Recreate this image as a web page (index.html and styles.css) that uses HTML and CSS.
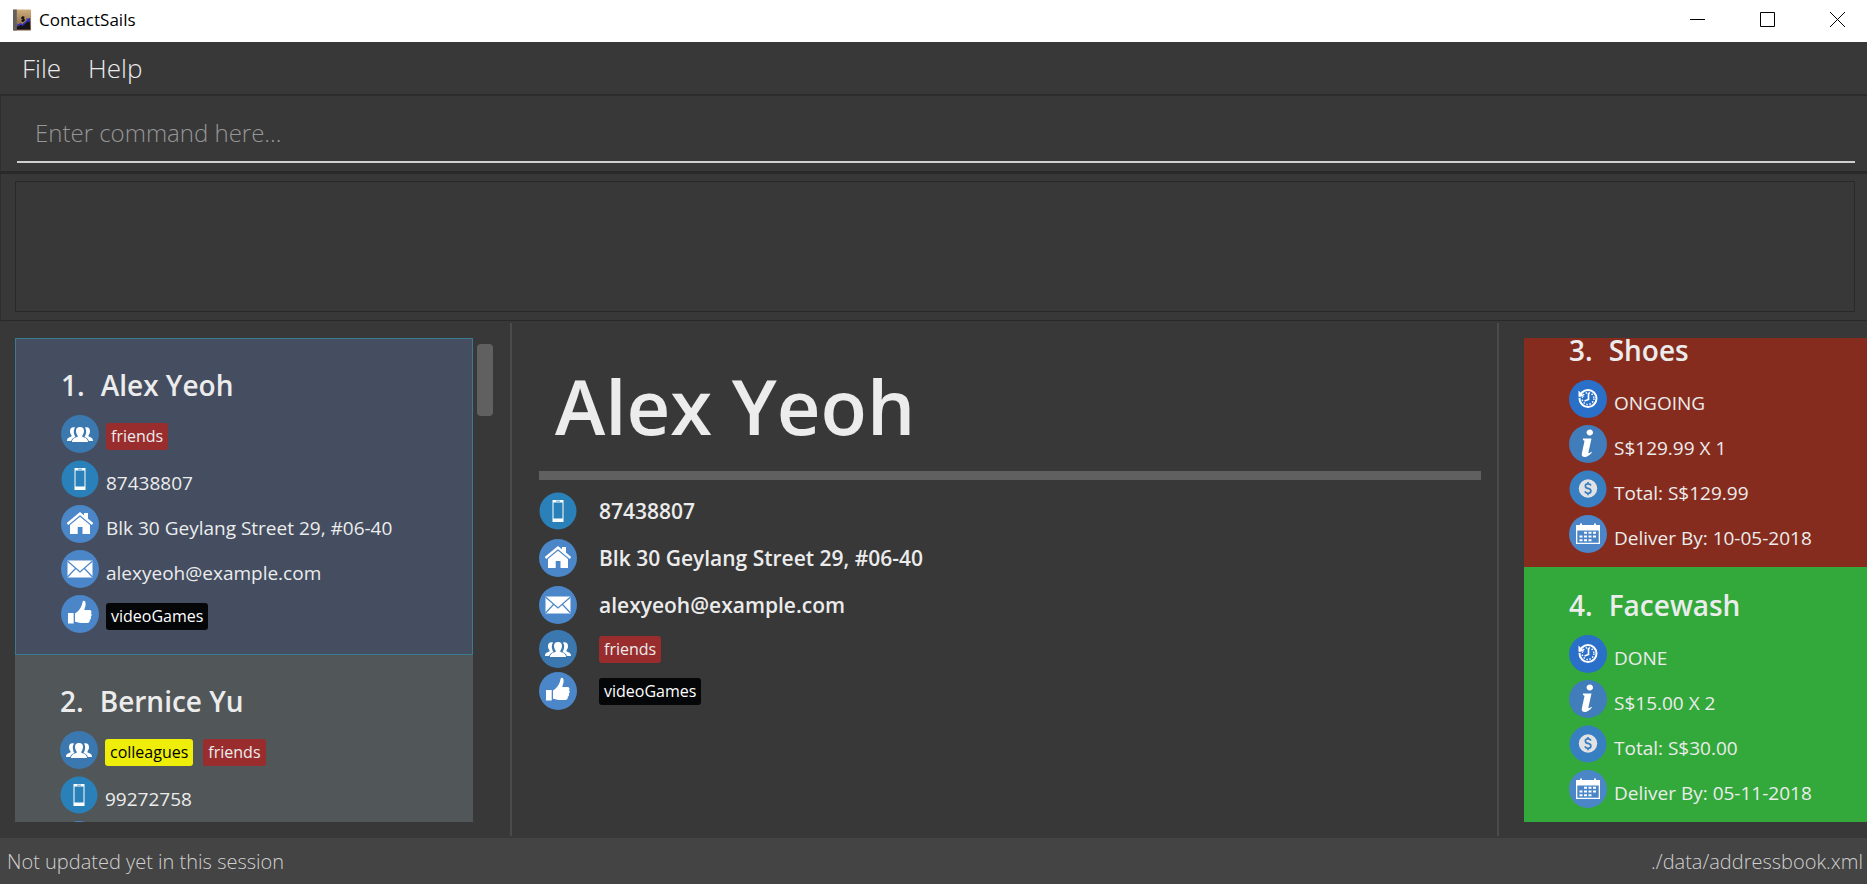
FILE: index.html
```html
<!DOCTYPE html>
<html lang="en">
<head>
<meta charset="utf-8">
<title>ContactSails</title>
<link rel="stylesheet" href="styles.css">
</head>
<body>
<svg class="sprite" aria-hidden="true">
  <symbol id="group" viewBox="0 0 38 38">
    <circle cx="19" cy="19" r="19" fill="#3b78b0"/>
    <g fill="#fff">
      <path d="M12.600 12.300c-2.600 0-3.900 1.900-3.600 4.500.2 1.700.8 2.700 1.500 3.400v1.300c-2.600 1-4.500 1.500-4.500 4.500h4.200c.3-2 1.700-3 4.300-4-1.900-3-2.400-7-.3-9.400z"/>
      <path d="M25.400 12.300c2.600 0 3.900 1.900 3.600 4.500-.2 1.700-.8 2.700-1.500 3.400v1.300c2.600 1 4.500 1.500 4.500 4.500h-4.200c-.3-2-1.700-3-4.300-4 1.900-3 2.400-7 .3-9.400z"/>
      <path d="M19 12c3 0 4.300 2 4 4.600-.2 2-1 3.300-1.700 4.100v1c3 1.200 5.700 1.800 5.700 5.300H11c0-3.500 2.700-4.100 5.700-5.300v-1c-.7-.8-1.500-2.100-1.700-4.100-.3-2.600 1-4.600 4-4.600z"/>
    </g>
  </symbol>
  <symbol id="phone" viewBox="0 0 38 38">
    <circle cx="19" cy="19" r="18.500" fill="#2a80b9"/>
    <path fill="#fff" fill-rule="evenodd" d="M13.500 8h11v22h-11zM14.500 10.500v16h9v-16zM17 8.800v.8h4v-.8z"/>
  </symbol>
  <symbol id="house" viewBox="0 0 38 38">
    <circle cx="19" cy="19" r="19" fill="#4a86c8"/>
    <path fill="none" stroke="#fff" stroke-width="2.400" d="M6.500 19 19 8.500 31.500 19"/>
    <path fill="#fff" d="M23 8h4v7l-4-3zM19 11.800l10 8.200v9h-7.500v-7h-4.800v7H9v-9z"/>
  </symbol>
  <symbol id="mail" viewBox="0 0 38 38">
    <circle cx="19" cy="19" r="19" fill="#4a86c8"/>
    <path fill="#fff" d="M6.500 10.500h25v17h-25z"/>
    <path fill="none" stroke="#4a86c8" stroke-width="1.200" d="M6.500 11 19 22 31.500 11M6.500 27l8-8.500M31.500 27l-8-8.500"/>
  </symbol>
  <symbol id="thumb" viewBox="0 0 38 38">
    <circle cx="19" cy="19" r="19" fill="#4a86c8"/>
    <path fill="#fff" d="M7 18h5.700v10.500H7zM14 18.500c3.500-2 6-5.500 7-9 .3-1.700.6-3.500 1.600-3.700 1.600-.2 2.200 1.700 2 4-.2 2-1 3.700-1.400 5.200h5.300c2 0 2.500 2 1.500 3.200 1 1 .9 2.600-.2 3.400.6 1.300.2 2.600-1 3.200.2 1.700-.5 3.200-2.800 3.200h-6c-2.500 0-3.500-1.300-6-1.300z"/>
  </symbol>
  <symbol id="clock" viewBox="0 0 38 38">
    <circle cx="19" cy="19" r="19" fill="#2b70c8"/>
    <circle cx="19" cy="18.500" r="8.500" fill="none" stroke="#fff" stroke-width="2"/>
    <circle cx="19" cy="18.500" r="5.900" fill="none" stroke="#fff" stroke-width="1.500" stroke-dasharray="1.400 1.690"/>
    <path fill="#fff" d="M9.500 10.500v6h6z"/>
    <path fill="none" stroke="#2b70c8" stroke-width="1" d="m8.500 17.500 4.500-.3"/>
    <path fill="none" stroke="#fff" stroke-width="1.700" d="M19.500 13v6.500L15.500 21"/>
  </symbol>
  <symbol id="info" viewBox="0 0 38 38">
    <circle cx="19" cy="19" r="19" fill="#407dba"/>
    <ellipse cx="20.800" cy="7.500" rx="3.200" ry="2.900" fill="#fff" transform="rotate(-25 20.800 7.500)"/>
    <path fill="#fff" d="M14 13.500h8.500l-3 13.500c-.3 1.500.4 1.900 2.900-.2l.5.800c-2.600 3.300-5.300 4.700-7.700 4.400-2.300-.3-2.800-1.700-2.300-4l2.500-11.500c.2-1-.2-1.300-1.500-1.300z"/>
  </symbol>
  <symbol id="dollar" viewBox="0 0 38 38">
    <circle cx="19" cy="19" r="18.500" fill="#387fc2"/>
    <circle cx="19" cy="18.500" r="9.200" fill="#e2e2e4"/>
    <path fill="none" stroke="#387fc2" stroke-width="1.700" d="M22 15.500c-.7-1.200-1.700-1.600-3-1.600-3.500 0-3.500 3.800 0 4.500 4 .8 3.700 4.900 0 4.900-1.500 0-2.600-.6-3.200-1.900M19 12v2M19 23v2.300"/>
  </symbol>
  <symbol id="calendar" viewBox="0 0 38 38">
    <circle cx="19" cy="19" r="19" fill="#4a86c8"/>
    <path fill="#fff" fill-rule="evenodd" d="M7 10h4V8.500h2V10h12V8.500h2V10h4v19H7zM8.300 15.500v12.200h21.400V15.500z"/>
    <path stroke="#fff" stroke-width="2" stroke-dasharray="3 1.500" d="M15 17.800h12.500M10.500 21.500h16.500M10.500 25.200h12"/>
  </symbol>
</svg>

<div class="window">
  <header class="titlebar">
    <svg class="app-icon" viewBox="0 0 20 22" aria-hidden="true">
      <defs>
        <linearGradient id="cover" x1="0" y1="0" x2="0" y2="1"><stop offset="0" stop-color="#cfae7e"/><stop offset="1" stop-color="#7a5c3c"/></linearGradient>
      </defs>
      <rect width="19" height="22" rx="1" fill="url(#cover)"/>
      <rect width="4" height="22" fill="#66605c"/>
      <path fill="#17131a" d="M4 18l4-2 3-1 3-3 4-3v12H4z"/>
      <path fill="none" stroke="#15100c" stroke-width="1.500" d="M12 8.300c-3-1-3.500 1.200-1.500 1.600 2.200.3 1.800 2.600-1.600 1.700M10.500 7v6"/>
      <path fill="none" stroke="#3430c8" stroke-width="1.400" d="m4 17 4-2 2 1.500 6-5.500M14 10h3v3"/>
    </svg>
    <h1 class="app-name">ContactSails</h1>
    <div class="window-buttons">
      <button type="button" aria-label="Minimize"><svg viewBox="0 0 15 15"><path d="M0 7.500h15"/></svg></button>
      <button type="button" aria-label="Maximize"><svg viewBox="0 0 15 15"><path d="M.5.5h14v14H.5z"/></svg></button>
      <button type="button" aria-label="Close"><svg viewBox="0 0 15 15"><path d="m0 0 15 15M15 0 0 15"/></svg></button>
    </div>
  </header>

  <nav class="menubar">
    <button type="button">File</button>
    <button type="button">Help</button>
  </nav>

  <div class="command">
    <input class="command-input" type="text" placeholder="Enter command here..." aria-label="Command">
  </div>

  <div class="result"><div class="result-box" role="status"></div></div>

  <main class="content">
    <section class="people" aria-label="Contacts">
      <div class="list">
        <article class="card selected">
          <h2 class="card-title"><span>1.</span><span>Alex Yeoh</span></h2>
          <div class="row"><svg class="icon"><use href="#group"/></svg><div class="tags"><span class="tag red">friends</span></div></div>
          <div class="row"><svg class="icon"><use href="#phone"/></svg><span class="value">87438807</span></div>
          <div class="row"><svg class="icon"><use href="#house"/></svg><span class="value">Blk 30 Geylang Street 29, #06-40</span></div>
          <div class="row"><svg class="icon"><use href="#mail"/></svg><span class="value">alexyeoh@example.com</span></div>
          <div class="row"><svg class="icon"><use href="#thumb"/></svg><div class="tags"><span class="tag black">videoGames</span></div></div>
        </article>
        <article class="card">
          <h2 class="card-title"><span>2.</span><span>Bernice Yu</span></h2>
          <div class="row"><svg class="icon"><use href="#group"/></svg><div class="tags"><span class="tag yellow">colleagues</span><span class="tag red">friends</span></div></div>
          <div class="row"><svg class="icon"><use href="#phone"/></svg><span class="value">99272758</span></div>
          <div class="row"><svg class="icon"><use href="#house"/></svg></div>
        </article>
      </div>
      <div class="scrollbar"><div class="thumb"></div></div>
    </section>

    <div class="divider"></div>

    <section class="detail" aria-label="Contact details">
      <h2 class="detail-name">Alex Yeoh</h2>
      <hr class="rule">
      <div class="detail-row"><svg class="icon"><use href="#phone"/></svg><span>87438807</span></div>
      <div class="detail-row"><svg class="icon"><use href="#house"/></svg><span>Blk 30 Geylang Street 29, #06-40</span></div>
      <div class="detail-row"><svg class="icon"><use href="#mail"/></svg><span>alexyeoh@example.com</span></div>
      <div class="detail-row tight"><svg class="icon"><use href="#group"/></svg><span class="tag red">friends</span></div>
      <div class="detail-row tight"><svg class="icon"><use href="#thumb"/></svg><span class="tag black">videoGames</span></div>
    </section>

    <div class="divider"></div>

    <section class="orders" aria-label="Orders">
      <article class="card ongoing">
        <h2 class="card-title"><span>3.</span><span>Shoes</span></h2>
        <div class="row"><svg class="icon"><use href="#clock"/></svg><span class="value">ONGOING</span></div>
        <div class="row"><svg class="icon"><use href="#info"/></svg><span class="value">S$129.99 X 1</span></div>
        <div class="row"><svg class="icon"><use href="#dollar"/></svg><span class="value">Total: S$129.99</span></div>
        <div class="row"><svg class="icon"><use href="#calendar"/></svg><span class="value">Deliver By: 10-05-2018</span></div>
      </article>
      <article class="card done">
        <h2 class="card-title"><span>4.</span><span>Facewash</span></h2>
        <div class="row"><svg class="icon"><use href="#clock"/></svg><span class="value">DONE</span></div>
        <div class="row"><svg class="icon"><use href="#info"/></svg><span class="value">S$15.00 X 2</span></div>
        <div class="row"><svg class="icon"><use href="#dollar"/></svg><span class="value">Total: S$30.00</span></div>
        <div class="row"><svg class="icon"><use href="#calendar"/></svg><span class="value">Deliver By: 05-11-2018</span></div>
      </article>
    </section>
  </main>

  <footer class="statusbar">
    <span>Not updated yet in this session</span>
    <span>./data/addressbook.xml</span>
  </footer>
</div>
</body>
</html>
```

FILE: styles.css
```css
* {
  box-sizing: border-box;
}

body {
  margin: 0;
  background: #383838;
  color: #ececec;
  font-family: "Open Sans", "Noto Sans", sans-serif;
}

h1,
h2 {
  margin: 0;
}

button {
  border: 0;
  padding: 0;
  background: none;
  color: inherit;
  font: inherit;
}

.sprite {
  display: none;
}

.window {
  display: flex;
  flex-direction: column;
  height: 100vh;
}

/* Title bar */
.titlebar {
  display: flex;
  align-items: center;
  flex: none;
  height: 42px;
  padding: 0 0 3px 13px;
  background: #fff;
  color: #000;
}

.app-icon {
  width: 19px;
  height: 22px;
}

.app-name {
  margin-left: 7px;
  font-size: 17px;
  font-weight: 400;
}

.window-buttons {
  display: flex;
  gap: 10px;
  margin-left: auto;
}

.window-buttons button {
  display: grid;
  place-items: center;
  width: 60px;
  height: 39px;
}

.window-buttons svg {
  width: 15px;
  height: 15px;
  fill: none;
  stroke: #000;
}

/* Menu */
.menubar {
  display: flex;
  flex: none;
  gap: 27px;
  height: 54px;
  padding: 0 22px;
  border-bottom: 2px solid #2c2c2c;
  font-size: 26px;
  font-weight: 300;
}

/* Command line and result box */
.command {
  flex: none;
  height: 78px;
  padding: 7px 12px 8px 16px;
  border-bottom: 3px solid #292929;
  border-left: 1px solid #2f2f2f;
}

.command-input {
  width: 100%;
  height: 60px;
  padding: 0 18px;
  border: 0;
  border-bottom: 2px solid #d0d0d0;
  outline: 0;
  background: transparent;
  color: #fff;
  font: 300 24px "Open Sans", "Noto Sans", sans-serif;
}

.command-input::placeholder {
  color: #969696;
  opacity: 1;
}

.result {
  flex: none;
  padding: 7px 12px 8px 14px;
  border-bottom: 1px solid #292929;
  border-left: 1px solid #2f2f2f;
}

.result-box {
  height: 131px;
  border: 1px solid #292929;
}

/* Three panes */
.content {
  display: grid;
  flex: 1;
  grid-template-columns: 510fr 2px 985fr 2px 368fr;
  min-height: 0;
}

.divider {
  margin: 2px 0;
  background: #4b4b4b;
}

.people {
  display: flex;
  gap: 4px;
  min-height: 0;
  padding: 17px 17px 16px 15px;
}

.list {
  flex: 1;
  overflow: hidden;
}

.scrollbar {
  width: 16px;
  padding-top: 6px;
}

.thumb {
  height: 72px;
  border-radius: 4px;
  background: #606060;
}

.card {
  padding: 26px 44px 14px 45px;
  background: #515658;
}

.people .card {
  padding-top: 34px;
}

.people .selected {
  border: 1px solid #3a7b91;
  background: #444e60;
}

.card-title {
  display: flex;
  gap: 16px;
  height: 42px;
  font-size: 28px;
  font-weight: 600;
  line-height: 24px;
}

.row {
  display: flex;
  gap: 7px;
  height: 45px;
}

.icon {
  flex: none;
  width: 38px;
  height: 38px;
}

.value {
  padding-top: 11px;
  font-size: 19px;
  line-height: 24px;
}

.tags {
  display: flex;
  gap: 10px;
  padding-top: 8px;
}

.tag {
  height: 27px;
  padding: 0 5px;
  border-radius: 3px;
  font-size: 16px;
  font-weight: 500;
  line-height: 26px;
}

.red {
  background: #992d2d;
}

.black {
  background: #050608;
  color: #fff;
}

.yellow {
  background: #eeee0a;
  color: #000;
}

/* Selected contact */
.detail {
  padding: 17px 16px 16px 27px;
}

.detail-name {
  height: 133px;
  padding-left: 16px;
  font-size: 76px;
  font-weight: 600;
  line-height: 136px;
}

.rule {
  height: 9px;
  margin: 0 0 7px;
  border: 0;
  background: #606060;
}

.detail-row {
  display: flex;
  align-items: center;
  gap: 22px;
  height: 47px;
  font-size: 21px;
  font-weight: 600;
}

.detail-row.tight {
  height: 42px;
}

.detail-row .tag {
  font-weight: 500;
}

/* Orders, scrolled to the end */
.orders {
  display: flex;
  flex-direction: column;
  justify-content: flex-end;
  min-height: 0;
  margin: 17px 0 16px 25px;
  overflow: hidden;
}

.ongoing {
  background: #852c1f;
}

.done {
  background: #32a93a;
}

.orders .card {
  flex: none;
  padding-bottom: 7px;
}

.statusbar {
  display: flex;
  align-items: center;
  justify-content: space-between;
  flex: none;
  height: 46px;
  padding: 0 4px 0 7px;
  background: #444;
  color: #d0d0d0;
  font-size: 20px;
  font-weight: 300;
}
```
